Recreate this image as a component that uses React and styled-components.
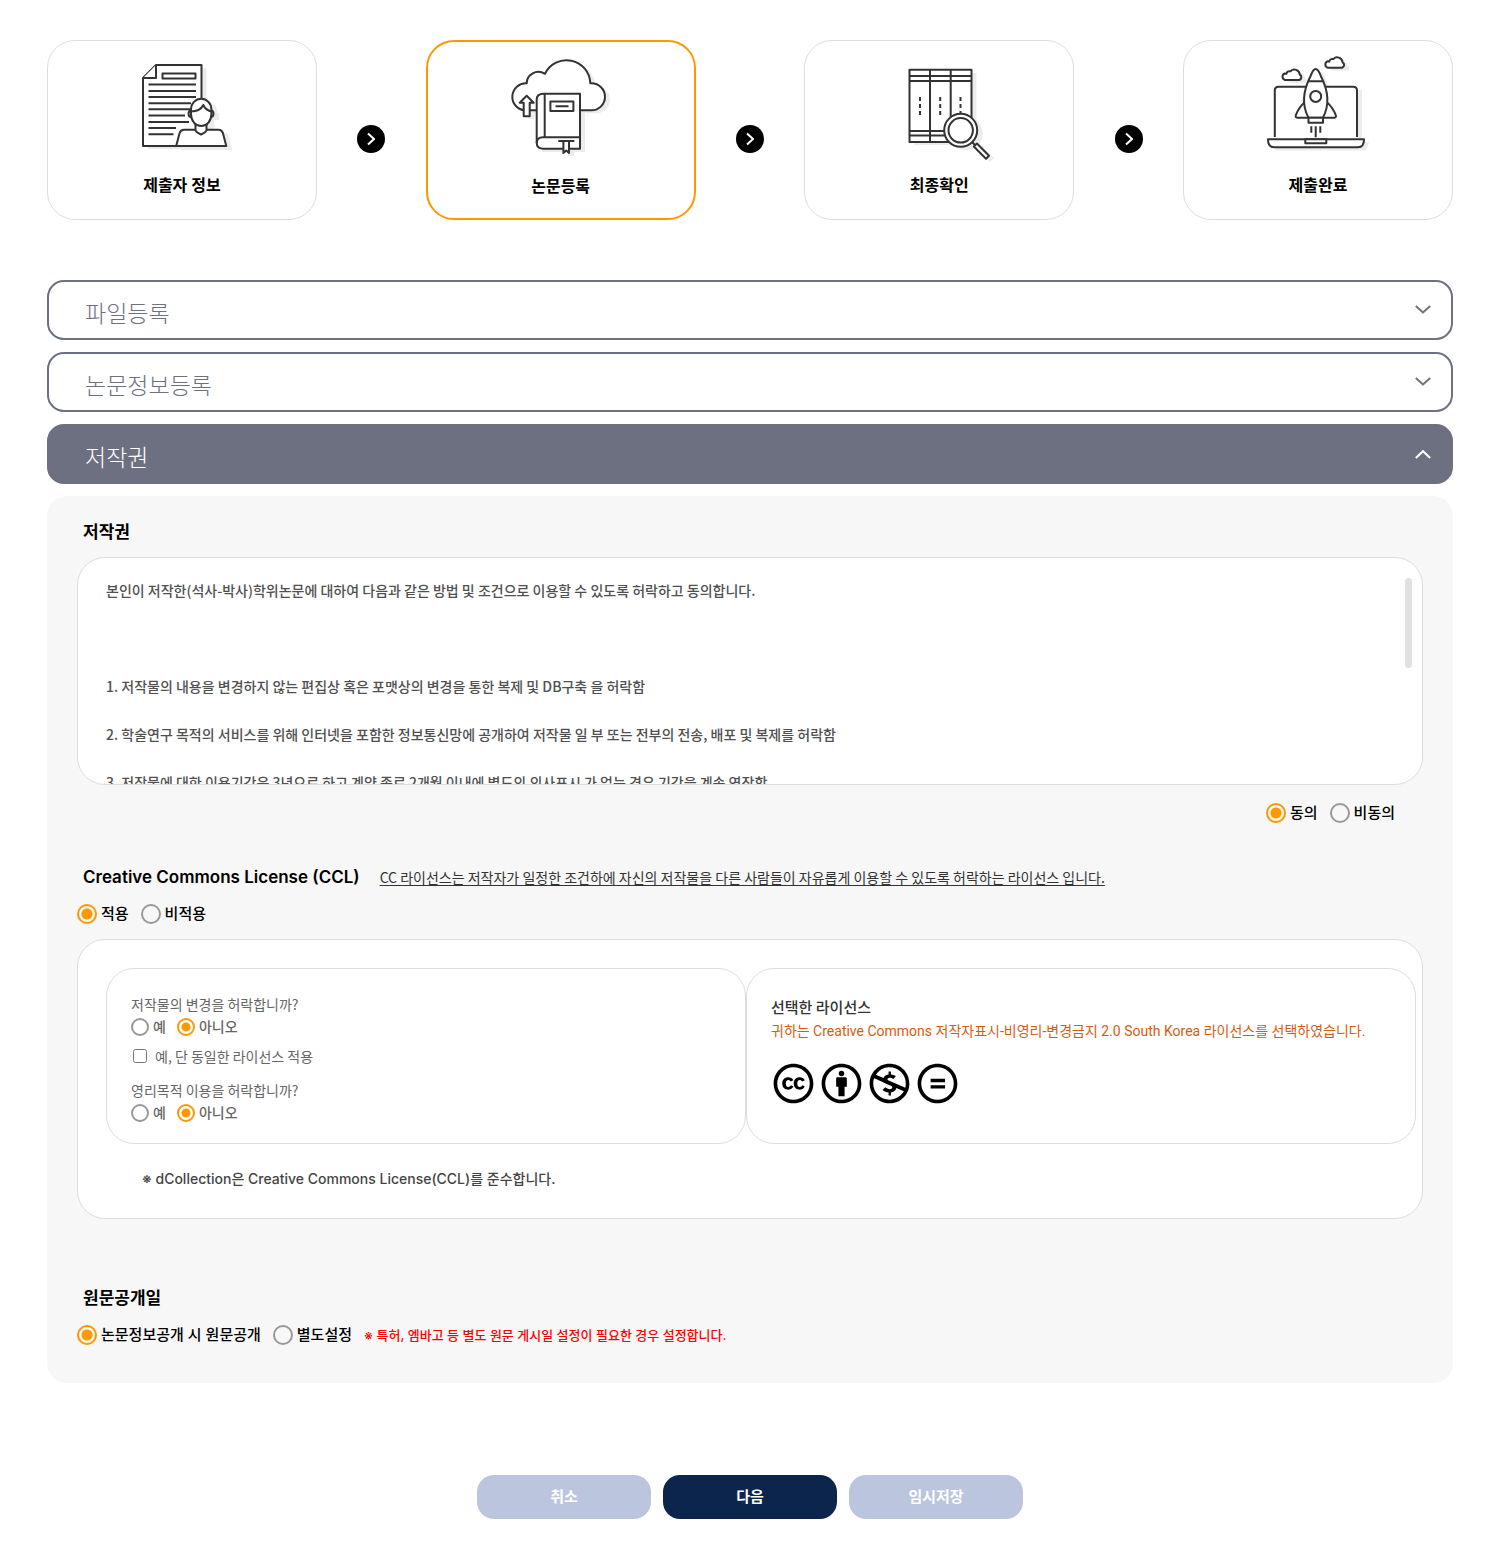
import React, { useState } from "react";
import styled, { createGlobalStyle, css } from "styled-components";
import {
  FaCreativeCommons,
  FaCreativeCommonsBy,
  FaCreativeCommonsNc,
  FaCreativeCommonsNd,
} from "react-icons/fa";

const color = {
  ink: "#000000",
  orange: "#ff9800",
  slate: "#6d7080",
  line: "#dddddd",
  panel: "#f7f7f7",
  navy: "#0c254c",
  pale: "#bbc5dd",
  art: "#333333",
  shade: "#ececec",
};

const font = {
  base: `Inter, "Noto Sans CJK KR", sans-serif`,
  korean: `"Noto Sans CJK KR", sans-serif`,
  mixed: `Roboto, "Noto Sans CJK KR", sans-serif`,
};

const GlobalStyle = createGlobalStyle`
  *, *::before, *::after { box-sizing: border-box; }
  body {
    margin: 0;
    background: #fff;
    color: ${color.ink};
    font-family: ${font.base};
    font-size: 14px;
    line-height: 24px;
  }
  button, input { font-family: inherit; }
`;

const Page = styled.main`
  padding: 40px 47px 34px;
`;

/* Steps */

const Steps = styled.ol`
  display: flex;
  justify-content: space-between;
  align-items: center;
  margin: 0 0 60px;
  padding: 0;
  list-style: none;
`;

const StepCard = styled.li`
  display: flex;
  flex-direction: column;
  align-items: center;
  gap: 11px;
  width: 270px;
  height: 180px;
  padding-top: 9px;
  border: ${(p) => (p.$active ? `2px solid ${color.orange}` : `1px solid ${color.line}`)};
  border-radius: 28px;
  background: #fff;
`;

const StepLabel = styled.span`
  font-size: 16px;
  font-weight: 600;
`;

const StepArrow = styled.li`
  display: flex;
  align-items: center;
  justify-content: center;
  width: 28px;
  height: 28px;
  margin-top: 18px;
  border-radius: 50%;
  background: #000;
  color: #fff;
`;

const Art = styled.svg`
  display: block;
  width: 120px;
  height: 112px;
  fill: #fff;
  stroke: ${color.art};
  stroke-width: 2;
  stroke-linejoin: round;
  .shade { fill: ${color.shade}; stroke: none; }
  .handle { stroke: ${color.shade}; stroke-width: 6; }
  .open { fill: none; }
`;

const DocumentArt = () => (
  <Art viewBox="122 50 120 112" aria-hidden="true">
    <g className="shade" transform="translate(5 3)">
      <path d="M143 78 156 65H201.500V146H143Z" />
      <circle cx="201" cy="110" r="11.500" />
      <path d="M188 110h26v7h-5v13h-14v-13h-7ZM176 147l3-14q1-3.500 4-3.500h36q4 0 5 3.500l3 14Z" />
    </g>
    <path d="M143 78 156 65H201.500V146H143Z" />
    <path d="M143 78h13V65" />
    <path d="M162.500 73.500h33v5h-33Z" />
    <path
      className="open"
      d="M148.500 84.500H196M148.500 91H196M148.500 97H196M148.500 103.300H191M148.500 109.300H191M148.500 115.500H185M148.500 122H189M148.500 128H176M148.500 134.300H173.500"
    />
    <path d="M176.200 146l3.400-13q1-3.300 4.400-3.300h34.500q3.400 0 4.400 3.300l3.400 13Z" />
    <path d="M195.500 123v7q0 2 5.500 4.500q5.500-2.500 5.500-4.500v-7Z" />
    <path d="M191.500 110.500c-4 0-4 6.500 0 6.500M210.500 110.500c4 0 4 6.500 0 6.500" />
    <path d="M191 109.500a10.200 10.800 0 0 1 20.400 0v4.500c0 7-4.500 12-10.200 12s-10.200-5-10.200-12Z" />
    <path className="open" d="M191 111.500q9 0 12.300-6.500q2.200 5 8 6.500" />
  </Art>
);

const cloudShape =
  "M525 110.300a13.500 13.500 0 0 1 1.700-27c0-9 10-14.500 18.300-9.500a23.800 23.800 0 0 1 45.300 9.500h1.200a13.500 13.500 0 0 1 0 27Z";

const CloudBookArt = () => (
  <Art viewBox="501 51 120 112" aria-hidden="true">
    <g className="shade" transform="translate(5 3)">
      <path d={cloudShape} />
      <path d="M523.500 102h6v14h-6ZM537 95h43v54h-43ZM563 148h6v5h-6Z" />
    </g>
    <path d={cloudShape} />
    <path d="M526.700 95.700l7 7h-4v13.500h-6v-13.500h-4Z" />
    <path d="M580 93.700h-36.500q-6.800 0-6.800 6v43q0 6 6.800 6H580Z" />
    <path className="open" d="M544.700 94v43.300M580 137.300h-37q-6.300 0-6.300 5.700M550.400 101.500h23v9.500h-23ZM555.500 106.300h13M558.300 141h16" />
    <path d="M563.400 141h5.600v12l-2.800-2.500-2.800 2.500Z" />
  </Art>
);

const BooksArt = () => (
  <Art viewBox="879 50 120 112" aria-hidden="true">
    <g className="shade" transform="translate(5 3)">
      <path d="M909.500 70h62v72h-62Z" />
      <circle cx="960.700" cy="130.300" r="17" />
      <path className="handle" d="M975 145l12 12" />
    </g>
    <path d="M909.500 69.800h62v72.200h-62Z" />
    <path
      className="open"
      d="M930 70v72M950.700 70v72M909.500 76h62M909.500 81h62M909.500 131h62M909.500 135.500h62"
    />
    <path
      className="open"
      strokeDasharray="4 3"
      d="M920 97v18M940.200 97v18M960.500 97v18"
    />
    <path className="open" d="M971.500 141.500l3.500 3.500" />
    <path d="M977 143.500l12 12.300-3 3-12.200-12.300Z" />
    <circle cx="960.700" cy="130.300" r="16.500" />
    <circle cx="960.700" cy="130.300" r="12.200" />
  </Art>
);

const puff =
  "M4 11.500a3.500 3.500 0 0 1-.5-6.500q1 0 2 .3q.3-3 4-2.500a5.300 5.300 0 0 1 9.200 3.200a3 3 0 0 1-.4 5.500Z";
const rocket =
  "M1308.500 117.700c-6-11-6-26 2.200-42q5-13.500 10 0c8.200 16 8.200 31 2.200 42Z";

const RocketArt = () => (
  <Art viewBox="1258 50 120 112" aria-hidden="true">
    <g className="shade" transform="translate(5 3)">
      <path d="M1275 87h82v50h-82ZM1268 139h96l-3 8.500h-90Z" />
      <path d={rocket} />
      <path d={puff} transform="translate(1281 68.500)" />
      <path d={puff} transform="translate(1323.800 56.300)" />
    </g>
    <path d="M1275 137h82v2h-82Z" stroke="none" />
    <path d="M1274.800 137V90.500q0-3.800 3.800-3.800h74.600q3.800 0 3.800 3.800V137" />
    <path d="M1268 139.300h96q0 8-6 8h-84q-6 0-6-8Z" />
    <path d="M1305.300 139.300h21v4h-21Z" />
    <path d={puff} transform="translate(1281 68.500)" />
    <path d={puff} transform="translate(1323.800 56.300)" />
    <path d="M1304.500 102.500q-5.500 4.500-8.700 12.700q-.7 2.500 1.500 2.500h37q2.200 0 1.500-2.500q-3.200-8.200-8.700-12.700Z" />
    <path d={rocket} />
    <path d="M1308.500 117.700h14.500v5h-14.500Z" />
    <path className="open" d="M1308.700 81.300h14.200M1311.300 126.300v6.500M1315.700 126.300v11M1320.300 126.300v6.500" />
    <circle cx="1315.700" cy="96.400" r="5.500" />
  </Art>
);

const steps = [
  { label: "제출자 정보", Picture: DocumentArt },
  { label: "논문등록", Picture: CloudBookArt, active: true },
  { label: "최종확인", Picture: BooksArt },
  { label: "제출완료", Picture: RocketArt },
];

/* Accordion */

const Accordion = styled.div`
  display: grid;
  gap: 12px;
`;

const AccordionHeader = styled.button`
  display: flex;
  align-items: center;
  justify-content: space-between;
  width: 100%;
  height: 60px;
  padding: 0 20px 0 36px;
  border: 2px solid ${color.slate};
  border-radius: 17px;
  background: ${(p) => (p.$open ? color.slate : "#fff")};
  color: ${(p) => (p.$open ? "#fff" : color.slate)};
  text-align: left;
  cursor: pointer;
`;

const AccordionTitle = styled.span`
  padding-top: 4px;
  font-family: ${font.korean};
  font-size: 23px;
  font-weight: 300;
  line-height: 32px;
`;

const Stroke = styled.svg`
  display: block;
  fill: none;
  stroke: currentColor;
  stroke-width: 2;
`;

const Chevron = ({ up }) => (
  <Stroke width="16" height="10" viewBox="0 0 16 10" aria-hidden="true">
    <path d={up ? "M.8 9 8 2.200l7.200 6.800" : "M.8 1 8 7.500l7.200-6.500"} />
  </Stroke>
);

const Panel = styled.section`
  padding: 24px 30px 36px;
  border-radius: 20px;
  background: ${color.panel};
`;

const SectionHead = styled.div`
  display: flex;
  align-items: center;
  gap: 20px;
  margin: ${(p) => p.$top || 0}px 0 13px;
  padding-left: 6px;
`;

const SectionTitle = styled.h2`
  margin: 0;
  font-size: 17px;
  font-weight: 600;
  line-height: 24px;
`;

const InfoLink = styled.a`
  color: #333;
  font-family: ${font.korean};
  font-size: 14px;
  text-decoration: underline;
  text-underline-offset: 2px;
`;

const TermsFrame = styled.div`
  position: relative;
  height: 228px;
  overflow: hidden;
  border: 1px solid ${color.line};
  border-radius: 28px;
  background: #fff;
`;

const TermsText = styled.div`
  display: grid;
  align-content: start;
  gap: 24px;
  height: 100%;
  padding: 20px 28px 0;
  overflow-y: auto;
  scrollbar-width: none;
  color: #505050;
  font-family: ${font.korean};
  font-size: 14px;
  font-weight: 500;
`;

const Clause = styled.p`
  min-height: 24px;
  margin: 0;
`;

const ScrollThumb = styled.span`
  position: absolute;
  top: 20px;
  right: 10px;
  width: 7px;
  height: 90px;
  border-radius: 4px;
  background: #e1e1e1;
`;

/* Choices */

const Choices = styled.div`
  display: flex;
  flex-wrap: wrap;
  align-items: center;
  justify-content: ${(p) => (p.$end ? "flex-end" : "flex-start")};
  gap: ${(p) => (p.$small ? 11 : 12)}px;
  padding: ${(p) => (p.$end ? "16px 28px 0" : 0)};
`;

const ChoiceLabel = styled.label`
  display: inline-flex;
  align-items: center;
  gap: 4px;
  font-size: ${(p) => (p.$small ? 14 : 15)}px;
  font-weight: 500;
  line-height: ${(p) => (p.$small ? 22 : 24)}px;
  color: ${(p) => (p.$small ? "#666" : color.ink)};
`;

const RadioInput = styled.input`
  appearance: none;
  flex: none;
  width: ${(p) => (p.$small ? 18 : 20)}px;
  height: ${(p) => (p.$small ? 18 : 20)}px;
  margin: 0;
  border: 2px solid #999;
  border-radius: 50%;
  ${(p) => css`
    &:checked {
      border-color: ${color.orange};
      background: radial-gradient(circle, ${color.orange} ${p.$small ? 4 : 5}px, transparent ${p.$small ? 5 : 6}px);
    }
  `}
`;

const Radio = ({ name, label, small, checked }) => (
  <ChoiceLabel $small={small}>
    <RadioInput type="radio" name={name} $small={small} defaultChecked={checked} />
    {label}
  </ChoiceLabel>
);

/* License */

const LicenseBox = styled.div`
  margin-top: 13px;
  padding: 28px 6px 27px 28px;
  border: 1px solid ${color.line};
  border-radius: 28px;
  background: #fff;
`;

const LicenseGrid = styled.div`
  display: grid;
  grid-template-columns: minmax(0, 64fr) minmax(0, 67fr);
`;

const LicenseCard = styled.div`
  padding: 23px 24px 19px;
  border: 1px solid ${color.line};
  border-radius: 28px;
`;

const Question = styled.p`
  margin: 0;
  color: #666;
  font-family: ${font.korean};
`;

const SameTerms = styled.label`
  display: flex;
  align-items: center;
  gap: 8px;
  margin: 7px 0 11px;
  color: #666;
  font-family: ${font.korean};
  line-height: 22px;
`;

const CheckInput = styled.input`
  width: 14px;
  height: 14px;
  margin: 0 0 0 2px;
`;

const ChosenTitle = styled.h3`
  margin: 3px 0 0;
  color: #333;
  font-family: ${font.korean};
  font-size: 15px;
  font-weight: 500;
  line-height: 24px;
`;

const ChosenText = styled.p`
  margin: 0 0 20px;
  color: #d85c10;
  font-family: ${font.mixed};
`;

const Badges = styled.div`
  display: flex;
  gap: 7px;
  padding-left: 2px;
  font-size: 41px;
  svg { display: block; }
`;

const Notice = styled.p`
  margin: 23px 0 0;
  padding-left: 36px;
  color: #444;
  font-weight: 500;
`;

const Warning = styled.span`
  color: #f00;
  font-size: 13px;
  font-weight: 500;
`;

const Actions = styled.div`
  display: flex;
  justify-content: center;
  gap: 12px;
  margin-top: 92px;
`;

const ActionButton = styled.button`
  width: 174px;
  height: 44px;
  padding: 0 0 4px;
  border: 0;
  border-radius: 17px;
  background: ${(p) => (p.$primary ? color.navy : color.pale)};
  color: #fff;
  font-size: 15px;
  font-weight: 600;
  cursor: pointer;
`;

export default function App() {
  const [open, setOpen] = useState(true);

  return (
    <>
      <GlobalStyle />
      <Page>
        <Steps>
          {steps.map(({ label, Picture, active }, i) => (
            <React.Fragment key={label}>
              {i > 0 && (
                <StepArrow aria-hidden="true">
                  <Stroke width="8" height="14" viewBox="0 0 8 14">
                    <path d="M1 1.500 7 7l-6 5.500" />
                  </Stroke>
                </StepArrow>
              )}
              <StepCard $active={active} aria-current={active ? "step" : undefined}>
                <Picture />
                <StepLabel>{label}</StepLabel>
              </StepCard>
            </React.Fragment>
          ))}
        </Steps>

        <Accordion>
          <AccordionHeader type="button" aria-expanded="false">
            <AccordionTitle>파일등록</AccordionTitle>
            <Chevron />
          </AccordionHeader>
          <AccordionHeader type="button" aria-expanded="false">
            <AccordionTitle>논문정보등록</AccordionTitle>
            <Chevron />
          </AccordionHeader>
          <AccordionHeader type="button" $open={open} aria-expanded={open} onClick={() => setOpen(!open)}>
            <AccordionTitle>저작권</AccordionTitle>
            <Chevron up={open} />
          </AccordionHeader>

          {open && (
            <Panel>
              <SectionHead>
                <SectionTitle>저작권</SectionTitle>
              </SectionHead>
              <TermsFrame>
                <TermsText tabIndex={0}>
                  <Clause>
                    본인이 저작한(석사-박사)학위논문에 대하여 다음과 같은 방법 및 조건으로 이용할 수 있도록 허락하고 동의합니다.
                  </Clause>
                  <Clause />
                  <Clause>1. 저작물의 내용을 변경하지 않는 편집상 혹은 포맷상의 변경을 통한 복제 및 DB구축 을 허락함</Clause>
                  <Clause>
                    2. 학술연구 목적의 서비스를 위해 인터넷을 포함한 정보통신망에 공개하여 저작물 일 부 또는 전부의 전송, 배포 및 복제를 허락함
                  </Clause>
                  <Clause>
                    3. 저작물에 대한 이용기간은 3년으로 하고 계약 종료 2개월 이내에 별도의 의사표시 가 없는 경우 기간을 계속 연장함
                  </Clause>
                </TermsText>
                <ScrollThumb />
              </TermsFrame>
              <Choices role="radiogroup" aria-label="저작권" $end>
                <Radio name="agree" label="동의" checked />
                <Radio name="agree" label="비동의" />
              </Choices>

              <SectionHead $top={40}>
                <SectionTitle>Creative Commons License (CCL)</SectionTitle>
                <InfoLink href="#ccl">
                  CC 라이선스는 저작자가 일정한 조건하에 자신의 저작물을 다른 사람들이 자유롭게 이용할 수 있도록 허락하는 라이선스 입니다.
                </InfoLink>
              </SectionHead>
              <Choices role="radiogroup" aria-label="Creative Commons License (CCL)">
                <Radio name="ccl" label="적용" checked />
                <Radio name="ccl" label="비적용" />
              </Choices>

              <LicenseBox id="ccl">
                <LicenseGrid>
                  <LicenseCard>
                    <Question id="q-change">저작물의 변경을 허락합니까?</Question>
                    <Choices role="radiogroup" aria-labelledby="q-change" $small>
                      <Radio name="change" label="예" small />
                      <Radio name="change" label="아니오" small checked />
                    </Choices>
                    <SameTerms>
                      <CheckInput type="checkbox" />
                      예, 단 동일한 라이선스 적용
                    </SameTerms>
                    <Question id="q-profit">영리목적 이용을 허락합니까?</Question>
                    <Choices role="radiogroup" aria-labelledby="q-profit" $small>
                      <Radio name="profit" label="예" small />
                      <Radio name="profit" label="아니오" small checked />
                    </Choices>
                  </LicenseCard>
                  <LicenseCard>
                    <ChosenTitle>선택한 라이선스</ChosenTitle>
                    <ChosenText>
                      귀하는 Creative Commons 저작자표시-비영리-변경금지 2.0 South Korea 라이선스를 선택하였습니다.
                    </ChosenText>
                    <Badges aria-hidden="true">
                      <FaCreativeCommons />
                      <FaCreativeCommonsBy />
                      <FaCreativeCommonsNc />
                      <FaCreativeCommonsNd />
                    </Badges>
                  </LicenseCard>
                </LicenseGrid>
                <Notice>※ dCollection은 Creative Commons License(CCL)를 준수합니다.</Notice>
              </LicenseBox>

              <SectionHead $top={67}>
                <SectionTitle>원문공개일</SectionTitle>
              </SectionHead>
              <Choices role="radiogroup" aria-label="원문공개일">
                <Radio name="release" label="논문정보공개 시 원문공개" checked />
                <Radio name="release" label="별도설정" />
                <Warning>※ 특허, 엠바고 등 별도 원문 게시일 설정이 필요한 경우 설정합니다.</Warning>
              </Choices>
            </Panel>
          )}
        </Accordion>

        <Actions>
          <ActionButton type="button">취소</ActionButton>
          <ActionButton type="button" $primary>다음</ActionButton>
          <ActionButton type="button">임시저장</ActionButton>
        </Actions>
      </Page>
    </>
  );
}
